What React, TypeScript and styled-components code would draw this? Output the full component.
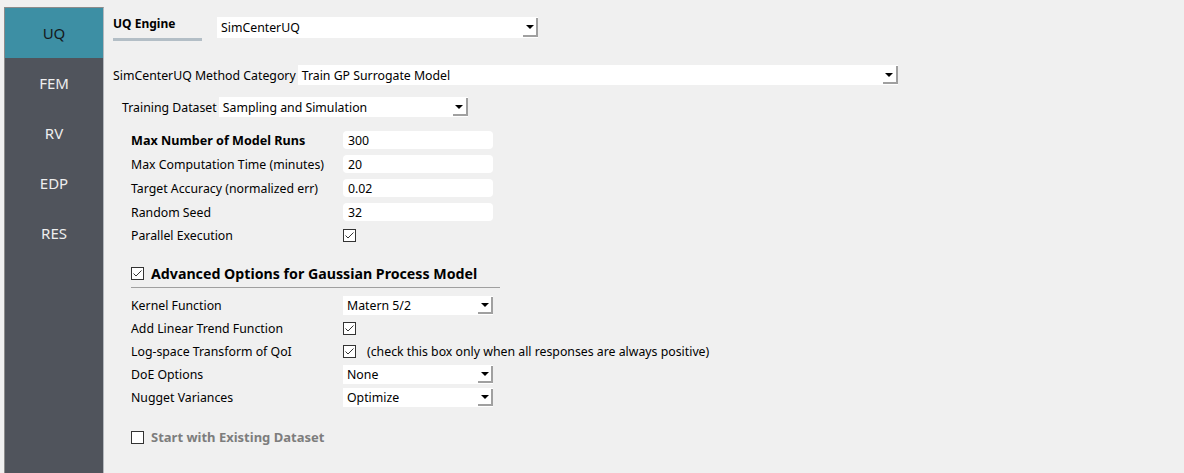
import React from "react";
import styled, { createGlobalStyle } from "styled-components";

const GlobalStyle = createGlobalStyle`
  html, body {
    margin: 0;
    padding: 0;
    background: #f0f0f0;
  }
  body {
    font-family: "Noto Sans", "Open Sans", sans-serif;
    font-size: 12.3px;
    color: #000;
  }
`;

const Page = styled.div`
  display: flex;
  height: 473px;
  padding: 7px 0 0 4px;
  box-sizing: border-box;
  overflow: hidden;
`;

const Sidebar = styled.div`
  width: 98px;
  flex: none;
  background: #50545c;
  border-left: 1px solid #8c8c8c;
  border-top: 1px solid #8c8c8c;
  border-right: 1px solid #b4b8bd;
  display: flex;
  flex-direction: column;
`;

const NavItem = styled.div<{ active?: boolean }>`
  height: 50px;
  display: flex;
  align-items: center;
  justify-content: center;
  font-size: 15px;
  color: ${(p) => (p.active ? "#15191c" : "#eeeeee")};
  background: ${(p) => (p.active ? "#3d8fa4" : "transparent")};
`;

const Main = styled.div`
  flex: 1;
  display: flex;
  flex-direction: column;
  padding: 10px 0 0 9px;
`;

const EngineRow = styled.div`
  display: flex;
  align-items: flex-start;
`;

const Tab = styled.div`
  display: flex;
  flex-direction: column;
  width: 89px;
  font-weight: bold;
  font-size: 12px;
  line-height: 14px;
  margin-right: 15px;
  &::after {
    content: "";
    display: block;
    height: 3px;
    margin-top: 7px;
    background: #b3bec6;
  }
`;

const Row = styled.div<{ indent?: number; top?: number }>`
  display: flex;
  align-items: center;
  margin-left: ${(p) => p.indent || 0}px;
  margin-top: ${(p) => p.top || 0}px;
`;

const InlineLabel = styled.span`
  margin-right: 2px;
  white-space: nowrap;
`;

const ComboBox = styled.div<{ w: number; h?: number }>`
  width: ${(p) => p.w}px;
  height: ${(p) => p.h || 19}px;
  box-sizing: border-box;
  background: #fff;
  display: flex;
  align-items: center;
  padding-left: 4px;
  white-space: nowrap;
`;

const ComboText = styled.span`
  flex: 1;
`;

const Arrow = styled.div`
  width: 15px;
  align-self: stretch;
  margin: 1px 0 1px;
  box-sizing: border-box;
  border-right: 2px solid #a0a0a0;
  border-bottom: 2px solid #a0a0a0;
  display: flex;
  align-items: center;
  justify-content: center;
  &::after {
    content: "";
    border-left: 4px solid transparent;
    border-right: 4px solid transparent;
    border-top: 4px solid #000;
    margin-top: 1px;
  }
`;

const Section = styled.div<{ top: number }>`
  display: flex;
  flex-direction: column;
  margin-left: 18px;
  margin-top: ${(p) => p.top}px;
`;

const FieldRow = styled.div<{ h: number }>`
  display: flex;
  align-items: center;
  height: ${(p) => p.h}px;
`;

const FieldLabel = styled.div<{ bold?: boolean }>`
  width: 212px;
  flex: none;
  white-space: nowrap;
  font-weight: ${(p) => (p.bold ? "bold" : "normal")};
  font-size: ${(p) => (p.bold ? "12.6px" : "inherit")};
`;

const TextInput = styled.div`
  width: 150px;
  height: 18px;
  box-sizing: border-box;
  background: #fff;
  border-radius: 4px;
  padding-left: 5px;
  display: flex;
  align-items: center;
`;

const Box = styled.div`
  width: 13px;
  height: 13px;
  box-sizing: border-box;
  border: 1px solid #333;
  background: #fff;
  flex: none;
  display: flex;
  align-items: center;
  justify-content: center;
`;

const Note = styled.span`
  margin-left: 11px;
  white-space: nowrap;
`;

const Header = styled.div<{ disabled?: boolean; size: number }>`
  display: flex;
  align-items: center;
  height: 20px;
  gap: 7px;
  font-weight: bold;
  font-size: ${(p) => p.size}px;
  white-space: nowrap;
  color: ${(p) => (p.disabled ? "#7d7d7d" : "#000")};
`;

const Separator = styled.div`
  width: 369px;
  height: 1px;
  background: #a0a0a0;
  margin: 4px 0 6px;
`;

const Checkbox: React.FC<{ checked?: boolean }> = ({ checked }) => (
  <Box>
    {checked && (
      <svg width="11" height="11" viewBox="0 0 11 11">
        <polyline points="1.5,5.5 4,8 9.5,2.5" fill="none" stroke="#333" strokeWidth="1" />
      </svg>
    )}
  </Box>
);

const Combo: React.FC<{ w: number; h?: number; value: string }> = ({ w, h, value }) => (
  <ComboBox w={w} h={h}>
    <ComboText>{value}</ComboText>
    <Arrow />
  </ComboBox>
);

const App: React.FC = () => {
  const nav = ["UQ", "FEM", "RV", "EDP", "RES"];
  const fields = [
    { label: "Max Number of Model Runs", value: "300", bold: true },
    { label: "Max Computation Time (minutes)", value: "20" },
    { label: "Target Accuracy (normalized err)", value: "0.02" },
    { label: "Random Seed", value: "32" },
  ];
  return (
    <>
      <GlobalStyle />
      <Page>
        <Sidebar>
          {nav.map((n, i) => (
            <NavItem key={n} active={i === 0}>
              {n}
            </NavItem>
          ))}
        </Sidebar>
        <Main>
          <EngineRow>
            <Tab>UQ Engine</Tab>
            <Combo w={321} h={21} value="SimCenterUQ" />
          </EngineRow>
          <Row top={24}>
            <InlineLabel>SimCenterUQ Method Category</InlineLabel>
            <Combo w={600} h={20} value="Train GP Surrogate Model" />
          </Row>
          <Row indent={9} top={12}>
            <InlineLabel>Training Dataset</InlineLabel>
            <Combo w={249} h={20} value="Sampling and Simulation" />
          </Row>
          <Section top={11}>
            {fields.map((f) => (
              <FieldRow key={f.label} h={24}>
                <FieldLabel bold={f.bold}>{f.label}</FieldLabel>
                <TextInput>{f.value}</TextInput>
              </FieldRow>
            ))}
            <FieldRow h={23}>
              <FieldLabel>Parallel Execution</FieldLabel>
              <Checkbox checked />
            </FieldRow>
          </Section>
          <Section top={16}>
            <Header size={14.2}>
              <Checkbox checked />
              Advanced Options for Gaussian Process Model
            </Header>
            <Separator />
            <FieldRow h={23}>
              <FieldLabel>Kernel Function</FieldLabel>
              <Combo w={150} value="Matern 5/2" />
            </FieldRow>
            <FieldRow h={23}>
              <FieldLabel>Add Linear Trend Function</FieldLabel>
              <Checkbox checked />
            </FieldRow>
            <FieldRow h={23}>
              <FieldLabel>Log-space Transform of QoI</FieldLabel>
              <Checkbox checked />
              <Note>(check this box only when all responses are always positive)</Note>
            </FieldRow>
            <FieldRow h={23}>
              <FieldLabel>DoE Options</FieldLabel>
              <Combo w={150} value="None" />
            </FieldRow>
            <FieldRow h={23}>
              <FieldLabel>Nugget Variances</FieldLabel>
              <Combo w={150} value="Optimize" />
            </FieldRow>
          </Section>
          <Section top={18}>
            <Header disabled size={13}>
              <Checkbox />
              Start with Existing Dataset
            </Header>
          </Section>
        </Main>
      </Page>
    </>
  );
};

export default App;
